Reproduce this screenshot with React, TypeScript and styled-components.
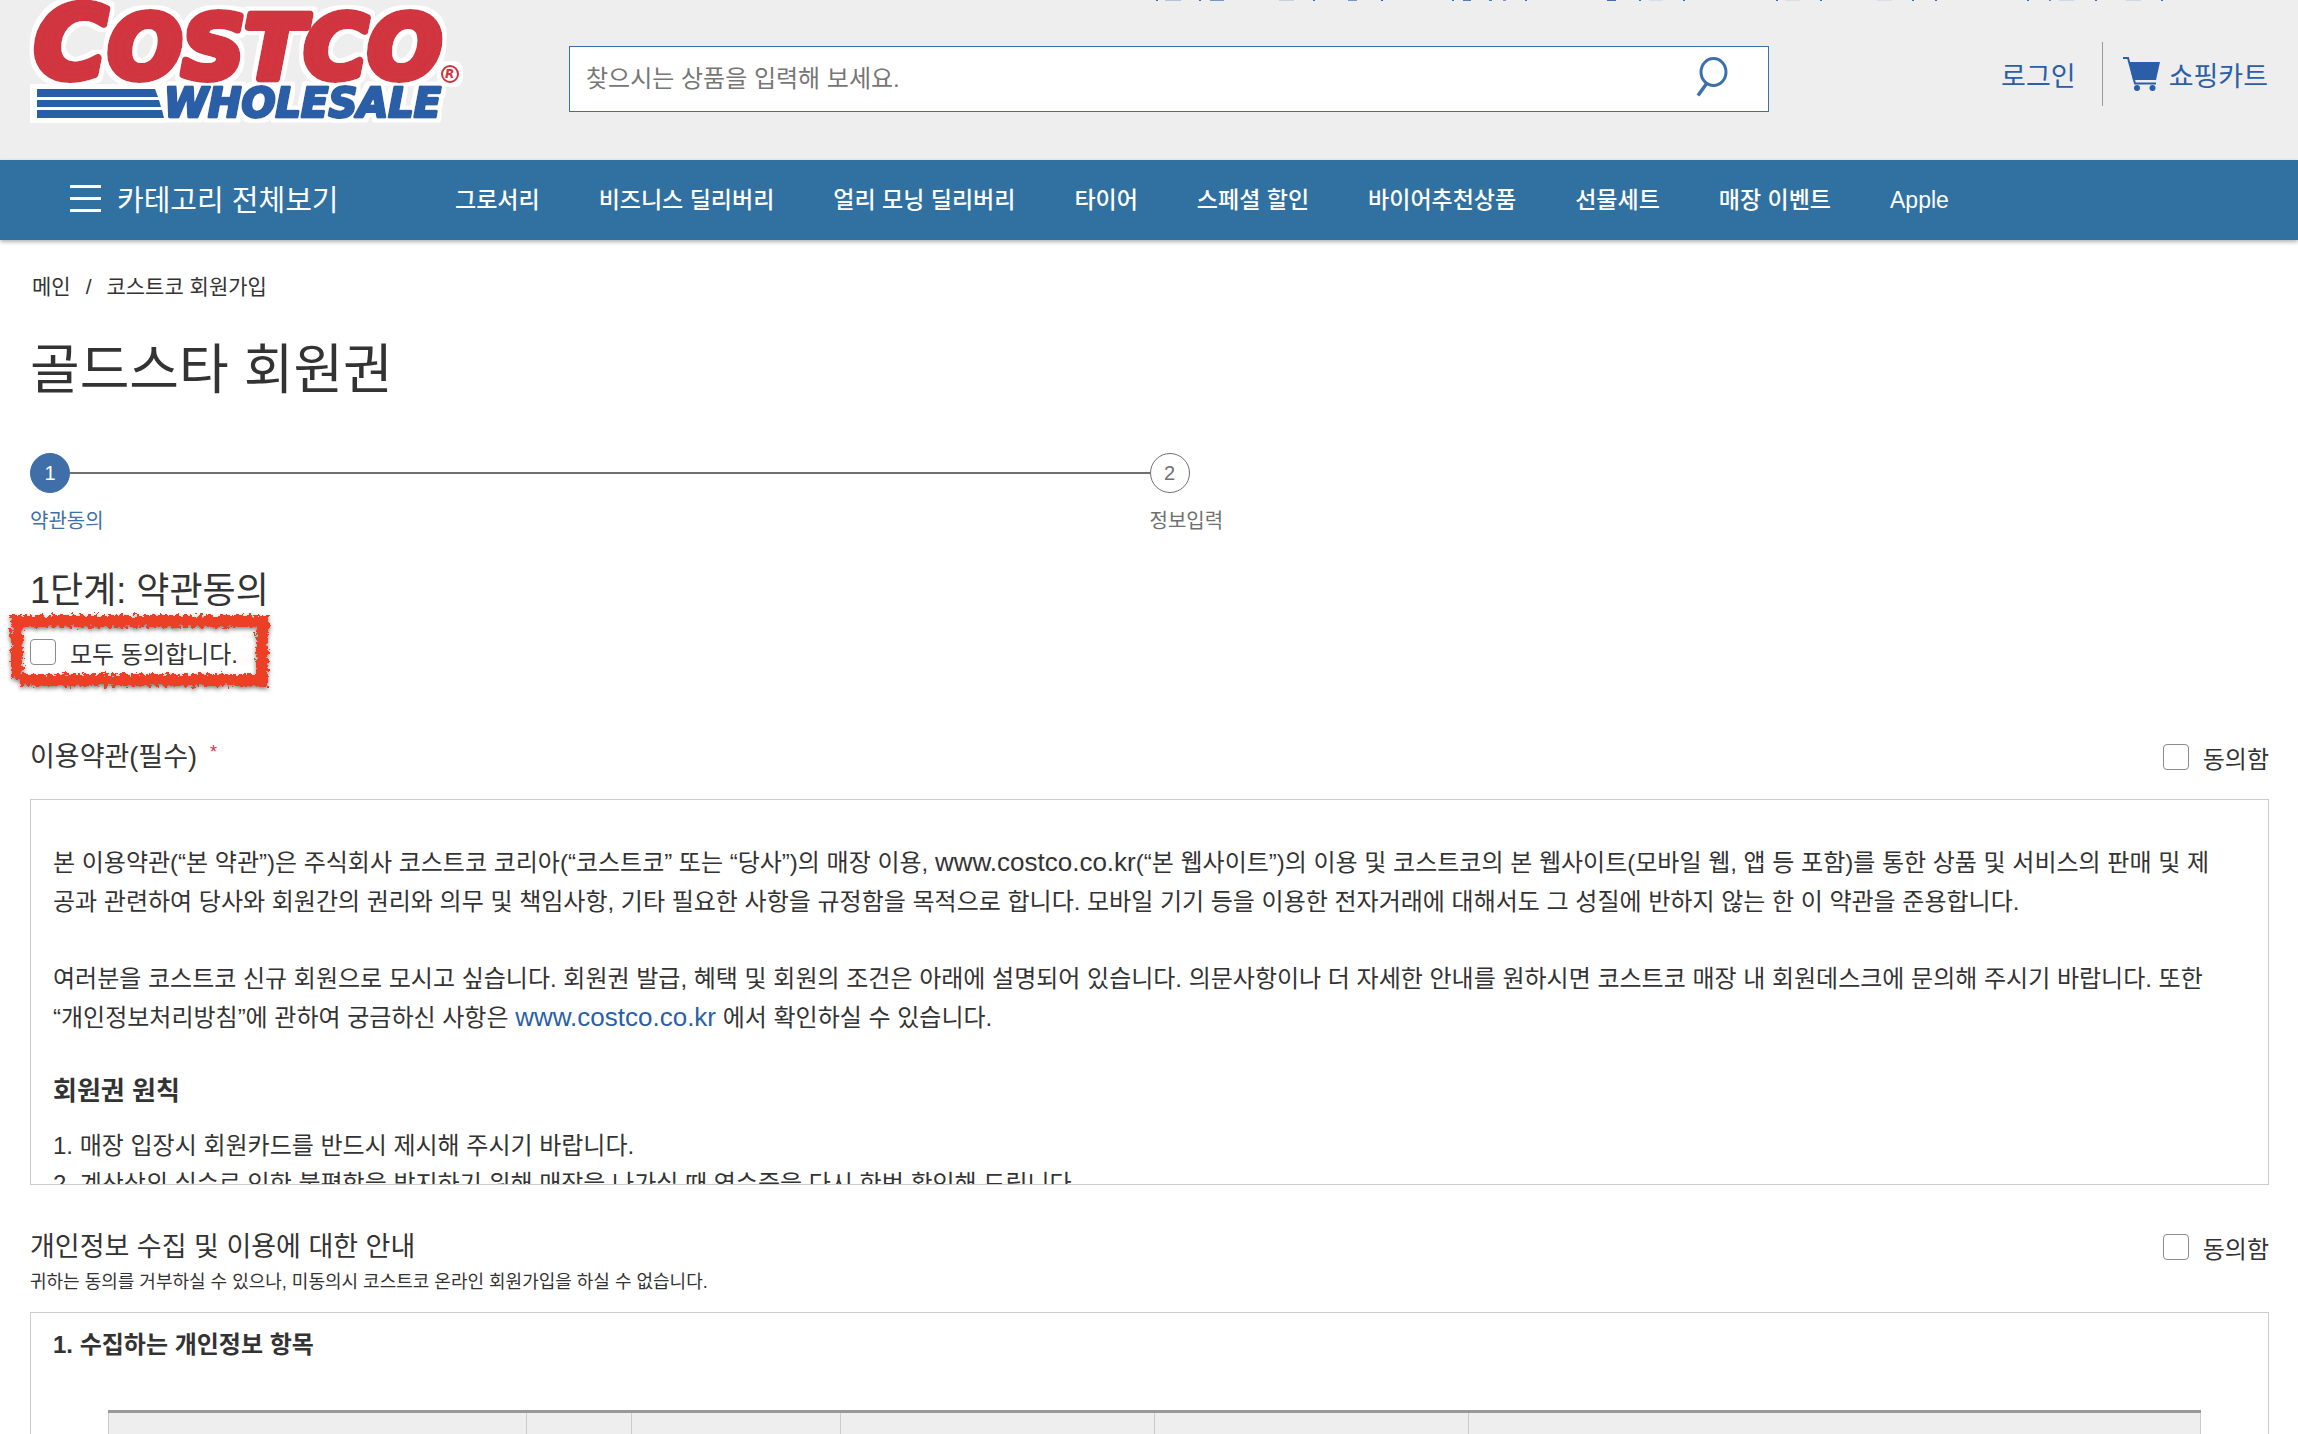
import React from "react";
import styled, { createGlobalStyle } from "styled-components";

const GlobalStyle = createGlobalStyle`
  *, *::before, *::after { box-sizing: border-box; }
  body {
    margin: 0;
    background: #fff;
    color: #333;
    font-family: "Liberation Sans", "Noto Sans CJK KR", sans-serif;
    font-size: 24px;
  }
  h1, h2, h3, h4, p, ul, ol { margin: 0; padding: 0; font-weight: 400; }
  a { color: inherit; text-decoration: none; }
  button { font: inherit; color: inherit; background: none; border: 0; padding: 0; cursor: pointer; }
`;

const Page = styled.div`
  height: 100vh;
  overflow: hidden;
`;

const Header = styled.header`
  position: relative;
  display: flex;
  align-items: flex-start;
  height: 160px;
  padding: 0 30px 0 29px;
  background: #eee;
  color: #2a5fa7;
`;

const UtilityEdge = styled.svg`
  position: absolute;
  top: 0;
  left: 50%;
  width: 1024px;
  height: 1px;
`;

const LogoLink = styled.a`
  flex: none;
  width: 440px;
  margin-right: 100px;
`;

const LogoSvg = styled.svg`
  display: block;
  overflow: visible;
  font-family: "DejaVu Sans", sans-serif;
  font-weight: 700;
  font-style: italic;
`;

const SearchForm = styled.form`
  display: flex;
  align-items: center;
  flex: 0 1 1200px;
  height: 66px;
  margin-top: 46px;
  padding: 0 40px 0 16px;
  background: #fff;
  border: 1px solid #3f6fa8;
`;

const SearchInput = styled.input`
  flex: 1;
  min-width: 0;
  height: 40px;
  padding: 0;
  border: 0;
  outline: 0;
  background: none;
  font: inherit;
  font-size: 24px;
  color: #333;
  &::placeholder { color: #767676; opacity: 1; }
`;

const SearchButton = styled.button`
  display: flex;
  height: 44px;
`;

const Account = styled.nav`
  display: flex;
  align-items: center;
  margin: 42px 0 0 auto;
  height: 64px;
  font-size: 27px;
  white-space: nowrap;
`;

const AccountLink = styled.a<{ $divided?: boolean }>`
  display: flex;
  align-items: center;
  gap: 8px;
  height: 64px;
  padding-left: ${(p) => (p.$divided ? "20px" : "0")};
  margin-left: ${(p) => (p.$divided ? "26px" : "0")};
  border-left: ${(p) => (p.$divided ? "1px solid #999" : "0")};
`;

const NavBar = styled.nav`
  position: relative;
  display: flex;
  align-items: center;
  height: 80px;
  padding: 0 0 4px 70px;
  background: #3071a1;
  color: #fff;
  box-shadow: 0 2px 4px rgba(0, 0, 0, 0.3);
  white-space: nowrap;
`;

const CategoryButton = styled.button`
  display: flex;
  align-items: center;
  gap: 16px;
  width: 385px;
  font-size: 29px;
`;

const NavList = styled.ul`
  display: flex;
  align-items: baseline;
  gap: 59px;
  list-style: none;
  font-size: 23px;
  font-weight: 500;
`;

const Main = styled.main`
  padding: 32px 29px 0 30px;
`;

const Breadcrumb = styled.nav`
  display: flex;
  gap: 15px;
  padding-left: 2px;
  font-size: 21px;
  line-height: 30px;
`;

const Title = styled.h1`
  margin-top: 36px;
  font-size: 54px;
  line-height: 64px;
`;

const Steps = styled.ol`
  display: flex;
  margin-top: 51px;
  list-style: none;
`;

const Step = styled.li<{ $last?: boolean }>`
  flex: ${(p) => (p.$last ? "1 1 0" : "0 0 50%")};
  color: ${(p) => (p.$last ? "#707070" : "#3f6fa8")};
  font-size: 20px;
  line-height: 30px;
`;

const StepTrack = styled.div`
  display: flex;
  align-items: center;
  margin-bottom: 13px;
`;

const StepDot = styled.span<{ $active?: boolean }>`
  display: flex;
  align-items: center;
  justify-content: center;
  width: 40px;
  height: 40px;
  border: 1px solid ${(p) => (p.$active ? "#3f6fa8" : "#707070")};
  border-radius: 50%;
  background: ${(p) => (p.$active ? "#3f6fa8" : "#fff")};
  color: ${(p) => (p.$active ? "#fff" : "#707070")};
`;

const StepLine = styled.span`
  flex: 1;
  height: 2px;
  background: #707070;
`;

const StepHeading = styled.h2`
  margin-top: 33px;
  font-size: 36px;
  line-height: 44px;
`;

const AgreeAll = styled.div`
  position: relative;
  display: flex;
  margin-top: 21px;
`;

const BrushFrame = styled.svg`
  position: absolute;
  left: -30px;
  top: -35px;
  overflow: visible;
  pointer-events: none;
`;

const CheckLabel = styled.label`
  display: flex;
  align-items: center;
  gap: 14px;
  height: 36px;
  font-size: 24px;
  white-space: nowrap;
`;

const Checkbox = styled.input`
  appearance: none;
  width: 26px;
  height: 26px;
  margin: 0;
  background: #fff;
  border: 1px solid #8c8c8c;
  border-radius: 4px;
  &:checked { background: #3f6fa8; }
`;

const Section = styled.section<{ $gap: number }>`
  margin-top: ${(p) => p.$gap}px;
`;

const SectionHead = styled.div`
  display: flex;
  justify-content: space-between;
  align-items: flex-start;
`;

const SectionTitle = styled.h3`
  display: flex;
  gap: 13px;
  font-size: 27px;
  line-height: 36px;
`;

const Required = styled.span`
  color: #d0343f;
  font-size: 18px;
  line-height: 26px;
`;

const Note = styled.p`
  font-size: 18px;
  line-height: 34px;
`;

const TermsBox = styled.div<{ $top: number }>`
  height: 386px;
  padding: ${(p) => p.$top}px 22px 0;
  border: 1px solid #ccc;
  overflow-y: auto;
  scrollbar-width: none;
`;

const Paragraph = styled.p`
  margin-bottom: 38px;
  line-height: 39px;
`;

const WebAddress = styled.span`
  font-size: 26px;
`;

const TermsLink = styled.a`
  color: #2a5fa7;
  font-size: 26px;
`;

const TermsHeading = styled.h4<{ $size: number }>`
  font-size: ${(p) => p.$size}px;
  font-weight: 700;
  line-height: 32px;
`;

const Rules = styled.ol`
  margin-top: 20px;
  line-height: 38px;
  list-style: none;
`;

const TableWrap = styled.div`
  margin: 49px 45px 0 55px;
`;

const InfoTable = styled.table`
  width: 100%;
  table-layout: fixed;
  border-collapse: collapse;
  border-top: 3px solid #999;
`;

const HeadCell = styled.th<{ $share: number }>`
  width: ${(p) => p.$share}%;
  height: 60px;
  background: #eee;
  border: 1px solid #ccc;
  border-top: 0;
`;

const navItems = [
  "그로서리",
  "비즈니스 딜리버리",
  "얼리 모닝 딜리버리",
  "타이어",
  "스페셜 할인",
  "바이어추천상품",
  "선물세트",
  "매장 이벤트",
  "Apple",
];

// x offset, width and opacity of each stroke along the page's top edge
const edgeMarks: [number, number, number][] = [
  [7, 2, 0.9], [16, 16, 0.3], [50, 2, 0.9], [61, 14, 0.6], [130, 15, 0.2],
  [164, 2, 0.9], [199, 9, 0.6], [232, 2, 1], [303, 2, 0.9], [314, 8, 0.8],
  [340, 3, 0.8], [354, 3, 0.6], [376, 2, 0.9], [458, 9, 0.9], [490, 2, 0.9],
  [500, 14, 0.1], [534, 2, 0.9], [627, 2, 0.9], [636, 15, 0.1], [671, 2, 0.9],
  [728, 15, 0.1], [763, 2, 0.9], [786, 2, 0.9], [878, 2, 0.9], [900, 2, 0.7],
  [910, 15, 0.15], [946, 2, 0.9], [977, 15, 0.15], [1012, 2, 0.9],
];

const columns = [20, 5, 10, 15, 15, 35];

function Logo() {
  return (
    <LogoSvg width="440" height="124" viewBox="0 0 440 124" role="img" aria-label="Costco Wholesale">
      <defs>
        <filter id="halo" x="-5%" y="-10%" width="110%" height="120%">
          <feMorphology in="SourceAlpha" operator="dilate" radius="4" result="grown" />
          <feFlood floodColor="#fff" />
          <feComposite in2="grown" operator="in" result="white" />
          <feMerge>
            <feMergeNode in="white" />
            <feMergeNode in="SourceGraphic" />
          </feMerge>
        </filter>
      </defs>
      <path d="M1 84h136v39H1z" fill="#fff" />
      <g filter="url(#halo)" strokeLinejoin="round">
        <g fill="#d0343f" stroke="#d0343f" strokeWidth="8">
          <text x="5" y="78" fontSize="100">C</text>
          <text x="79" y="78" fontSize="87">OSTCO</text>
        </g>
        <text x="135" y="117" fontSize="40" fill="#2a5fa7" stroke="#2a5fa7" strokeWidth="3">
          WHOLESALE
        </text>
        <circle cx="421" cy="74" r="9" fill="#fff" />
      </g>
      <path d="M8 89h118l3 8H8zM8 100h122l2 7H8zM8 110h125l2 8H8z" fill="#2a5fa7" />
      <circle cx="421" cy="74" r="8" fill="#fff" stroke="#d0343f" strokeWidth="2" />
      <text x="416" y="78" fontSize="12" fill="#d0343f">R</text>
    </LogoSvg>
  );
}

function SearchIcon() {
  return (
    <svg width="32" height="40" viewBox="0 0 32 40" fill="none" stroke="#3f6fa8" strokeWidth="3">
      <ellipse cx="17.500" cy="15" rx="12.500" ry="13.500" />
      <path d="M11 26L2 38.500" strokeWidth="3.500" />
    </svg>
  );
}

function CartIcon() {
  return (
    <svg width="38" height="38" viewBox="0 0 38 38" fill="#2a5fa7">
      <path d="M6 7h31l-4 18H10z" />
      <path d="M0 3h5l7 25.500h21" fill="none" stroke="#2a5fa7" strokeWidth="2" />
      <circle cx="14" cy="33" r="3" />
      <circle cx="29.500" cy="33" r="3" />
    </svg>
  );
}

function MenuIcon() {
  return (
    <svg width="31" height="30" viewBox="0 0 31 30" fill="#fff">
      <path d="M0 2h31v3H0zM0 14h31v3H0zM0 26h31v3H0z" />
    </svg>
  );
}

function AgreeCheck({ id }: { id: string }) {
  return (
    <CheckLabel htmlFor={id}>
      <Checkbox type="checkbox" id={id} />
      동의함
    </CheckLabel>
  );
}

export default function App() {
  return (
    <Page>
      <GlobalStyle />
      <Header>
        <UtilityEdge viewBox="0 0 1024 1" aria-hidden="true">
          {edgeMarks.map(([x, w, o]) => (
            <rect key={x} x={x} y="0" width={w} height="1" fill="#2a5fa7" opacity={o} />
          ))}
        </UtilityEdge>
        <LogoLink href="#home">
          <Logo />
        </LogoLink>
        <SearchForm role="search">
          <SearchInput type="text" aria-label="상품 검색" placeholder="찾으시는 상품을 입력해 보세요." />
          <SearchButton type="button" aria-label="검색">
            <SearchIcon />
          </SearchButton>
        </SearchForm>
        <Account>
          <AccountLink href="#login">로그인</AccountLink>
          <AccountLink href="#cart" $divided>
            <CartIcon />
            쇼핑카트
          </AccountLink>
        </Account>
      </Header>

      <NavBar>
        <CategoryButton type="button">
          <MenuIcon />
          카테고리 전체보기
        </CategoryButton>
        <NavList>
          {navItems.map((item) => (
            <li key={item}>
              <a href="#category">{item}</a>
            </li>
          ))}
        </NavList>
      </NavBar>

      <Main>
        <Breadcrumb>
          <a href="#main">메인</a>
          <span>/</span>
          <a href="#join">코스트코 회원가입</a>
        </Breadcrumb>
        <Title>골드스타 회원권</Title>

        <Steps>
          <Step>
            <StepTrack>
              <StepDot $active>1</StepDot>
              <StepLine />
            </StepTrack>
            약관동의
          </Step>
          <Step $last>
            <StepTrack>
              <StepDot>2</StepDot>
            </StepTrack>
            정보입력
          </Step>
        </Steps>

        <StepHeading>1단계: 약관동의</StepHeading>
        <AgreeAll>
          <CheckLabel htmlFor="agree-all">
            <Checkbox type="checkbox" id="agree-all" />
            모두 동의합니다.
          </CheckLabel>
          <BrushFrame width="290" height="100" viewBox="0 0 290 100" aria-hidden="true">
            <defs>
              <filter id="brush" x="-10%" y="-20%" width="120%" height="140%">
                <feTurbulence type="fractalNoise" baseFrequency="0.25" numOctaves="4" seed="4" result="n" />
                <feDisplacementMap
                  in="SourceGraphic"
                  in2="n"
                  scale="10"
                  xChannelSelector="R"
                  yChannelSelector="G"
                  result="d"
                />
                <feDropShadow in="d" dx="0" dy="2" stdDeviation="2" floodColor="#000" floodOpacity="0.5" />
              </filter>
            </defs>
            <g filter="url(#brush)" fill="none" stroke="#eb4025" strokeWidth="12">
              <path d="M12 22H269M262 16V88M268 81H20M17 20V80" />
            </g>
          </BrushFrame>
        </AgreeAll>

        <Section $gap={69}>
          <SectionHead>
            <SectionTitle>
              이용약관(필수) <Required>*</Required>
            </SectionTitle>
            <AgreeCheck id="agree-terms" />
          </SectionHead>
          <Section $gap={24}>
            <TermsBox $top={43} tabIndex={0}>
              <Paragraph>
                본 이용약관(“본 약관”)은 주식회사 코스트코 코리아(“코스트코” 또는 “당사”)의 매장 이용,{" "}
                <WebAddress>www.costco.co.kr</WebAddress>(“본 웹사이트”)의 이용 및 코스트코의 본 웹사이트(모바일 웹, 앱
                등 포함)를 통한 상품 및 서비스의 판매 및 제<br />
                공과 관련하여 당사와 회원간의 권리와 의무 및 책임사항, 기타 필요한 사항을 규정함을 목적으로 합니다.
                모바일 기기 등을 이용한 전자거래에 대해서도 그 성질에 반하지 않는 한 이 약관을 준용합니다.
              </Paragraph>
              <Paragraph>
                여러분을 코스트코 신규 회원으로 모시고 싶습니다. 회원권 발급, 혜택 및 회원의 조건은 아래에 설명되어
                있습니다. 의문사항이나 더 자세한 안내를 원하시면 코스트코 매장 내 회원데스크에 문의해 주시기 바랍니다.
                또한
                <br />
                “개인정보처리방침”에 관하여 궁금하신 사항은 <TermsLink href="#site">www.costco.co.kr</TermsLink> 에서
                확인하실 수 있습니다.
              </Paragraph>
              <TermsHeading $size={26}>회원권 원칙</TermsHeading>
              <Rules>
                <li>1. 매장 입장시 회원카드를 반드시 제시해 주시기 바랍니다.</li>
                <li>2. 계산상의 실수로 인한 불편함을 방지하기 위해 매장을 나가실 때 영수증을 다시 한번 확인해 드립니다.</li>
              </Rules>
            </TermsBox>
          </Section>
        </Section>

        <Section $gap={44}>
          <SectionHead>
            <div>
              <SectionTitle>개인정보 수집 및 이용에 대한 안내</SectionTitle>
              <Note>귀하는 동의를 거부하실 수 있으나, 미동의시 코스트코 온라인 회원가입을 하실 수 없습니다.</Note>
            </div>
            <AgreeCheck id="agree-privacy" />
          </SectionHead>
          <Section $gap={13}>
            <TermsBox $top={16} tabIndex={0}>
              <TermsHeading $size={24}>1. 수집하는 개인정보 항목</TermsHeading>
              <TableWrap>
                <InfoTable>
                  <thead>
                    <tr>
                      {columns.map((share, i) => (
                        <HeadCell key={i} $share={share} scope="col" />
                      ))}
                    </tr>
                  </thead>
                </InfoTable>
              </TableWrap>
            </TermsBox>
          </Section>
        </Section>
      </Main>
    </Page>
  );
}
